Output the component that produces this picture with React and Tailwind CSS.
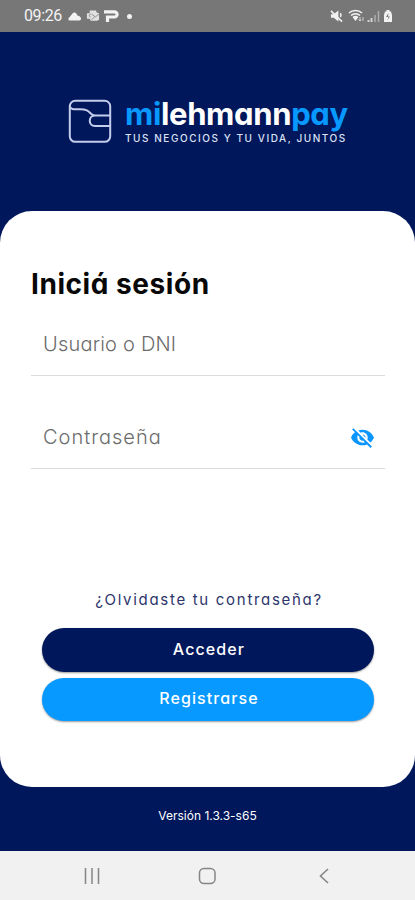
import { MdVisibilityOff } from "react-icons/md";

const StatusBar = () => (
  <div className="h-8 shrink-0 bg-[#777777] flex items-center justify-between pl-6 pr-[22px] text-[#f2f2f2]">
    <div className="flex items-center">
      <span className="font-[Roboto] text-[16px] leading-none tracking-[-0.4px] w-[44px]">
        09:26
      </span>
      <svg className="w-[13px] h-[14px] mr-[5px]" viewBox="0 0 13 14">
        <path d="M2 11.500C0 11.500-.2 9 1.500 8.300L4.500 4.500c1-1.200 2.800-1.200 3.800 0l1.400 2.300c2 .2 3.300 1.500 3.300 3 0 1-.6 1.700-1.500 1.700z" fill="currentColor" />
      </svg>
      <svg className="w-[14px] h-[14px] mr-1" viewBox="0 0 15 14">
        <path d="M4 1h7v2l3 1v7l-2 1H5l-1-2H1V4h3z" fill="currentColor" opacity="0.85" />
        <path d="M6 5l4 3 4-3M6 11l3-3M5 5a1.500 1.500 0 1 0 0 3" fill="none" stroke="#777777" strokeWidth="0.800" />
      </svg>
      <svg className="w-[15px] h-[14px]" viewBox="0 0 15 14">
        <path d="M0 2.800h10.500a2.500 2.500 0 0 1 0 5.200H3.500v5" fill="none" stroke="currentColor" strokeWidth="3.200" />
      </svg>
      <span className="w-[5px] h-[5px] rounded-full bg-[#f2f2f2] ml-[8px]" />
    </div>
    <div className="flex items-center">
      <svg className="w-[13px] h-[14px] mr-[5px]" viewBox="0 0 14 14">
        <path d="M1 5h3l5-4v12L4 9H1z" fill="currentColor" />
        <path d="M1 1.500l12 11.500M11 4c1 1 1 3 0 4" fill="none" stroke="currentColor" strokeWidth="1.700" />
      </svg>
      <svg className="w-[17px] h-[14px] mr-[2px]" viewBox="0 0 17 14">
        <path d="M1 4a9.500 9.500 0 0 1 13 0M3 6.500a6.500 6.500 0 0 1 9 0" fill="none" stroke="currentColor" strokeWidth="1.600" />
        <path d="M4.500 8a4.500 4.500 0 0 1 6 0l-3 4z" fill="currentColor" />
        <path d="M12 12V8m-1.500 2.500L12 12l1-1.500M15 8v4" fill="none" stroke="currentColor" opacity="0.7" />
      </svg>
      <svg className="w-[13px] h-[14px] mr-[3px]" viewBox="0 0 13 14">
        <path d="M1.500 13v-2M4.500 13V9" stroke="currentColor" strokeWidth="2" opacity="0.75" />
        <path d="M8 13V6M11.500 13V2" stroke="currentColor" strokeWidth="1.500" opacity="0.45" />
      </svg>
      <svg className="w-[10px] h-[14px]" viewBox="0 0 10 14">
        <path d="M3.500 1h3v1.500H8L9 6v7H1V6l1-3.500h1.500z" fill="currentColor" />
        <path d="M5.500 4L3 8h2.500L4.500 11 7 7.500H5z" fill="#777777" />
      </svg>
    </div>
  </div>
);

const Logo = () => (
  <div className="h-[179px] shrink-0 flex pl-[68px] pt-[67px] gap-[13px]">
    <svg className="w-11 h-11 shrink-0" viewBox="0 0 44 44" fill="none" stroke="#c5cdec" strokeWidth="2">
      <rect x="1.800" y="1.800" width="40.400" height="41" rx="5.500" />
      <path d="M1.800 7.500c.7 2 2.200 2.700 4.200 2.700h6c7 0 8.500 2 11 4.500 1 1 2 1.500 3.500 1.800" />
      <path d="M42 16.500H27c-7 0-7 10.500 0 10.500h15" />
    </svg>
    <div className="text-white">
      <div className="text-[31px] leading-[38px] h-9 -mt-[4px] mb-px font-bold tracking-[-0.35px] whitespace-nowrap">
        <span className="text-[#0799ff]">mi</span>lehmann
        <span className="text-[#0799ff]">pay</span>
      </div>
      <div className="text-[10px] leading-[12px] font-medium tracking-[1.55px] whitespace-nowrap text-[#dce2f4]">
        TUS NEGOCIOS Y TU VIDA, JUNTOS
      </div>
    </div>
  </div>
);

const Field = ({ label, children }) => (
  <div className="h-[63px] border-b-[1.5px] border-[#dcdcdc] pl-3 pr-[10px] flex items-center justify-between">
    {label}
    {children}
  </div>
);

const NavBar = () => (
  <div className="h-[49px] shrink-0 bg-[#f1f1f1] flex items-center text-[#858585]">
    <svg className="w-4 h-4 ml-[84px]" viewBox="0 0 16 16" stroke="currentColor" strokeWidth="1.500">
      <path d="M1.500 0v16M8 0v16M14.500 0v16" />
    </svg>
    <svg className="w-[18px] h-[18px] ml-[98px]" viewBox="0 0 18 18" fill="none" stroke="currentColor" strokeWidth="1.500">
      <rect x="1.500" y="1.500" width="15.500" height="15" rx="4.500" />
    </svg>
    <svg className="w-[10px] h-4 ml-[103px]" viewBox="0 0 10 16" fill="none" stroke="currentColor" strokeWidth="1.600">
      <path d="M9 1L1.500 8 9 15" />
    </svg>
  </div>
);

export default function App() {
  return (
    <div className="w-[415px] h-[900px] overflow-hidden flex flex-col bg-[#00175c] font-[Inter,sans-serif] [font-feature-settings:'cv11']">
      <StatusBar />
      <Logo />
      <main className="h-[576px] shrink-0 bg-white rounded-[32px] px-[31px] pt-[55px] flex flex-col">
        <h1 className="text-[28px] leading-9 h-[47px] font-bold tracking-[0.55px] text-[#080808]">
          Iniciá sesión
        </h1>
        <div className="flex flex-col gap-[30px] w-[354px] text-[20px] font-light text-[#6c6c6c]">
          <Field label={<span className="tracking-[0.2px]">Usuario o DNI</span>} />
          <Field label={<span className="tracking-[1px]">Contraseña</span>}>
            <MdVisibilityOff className="w-[25px] h-[25px] text-[#0a95ff]" />
          </Field>
        </div>
        <a className="block mt-[119px] pl-[3px] text-center text-[15px] leading-6 tracking-[1.7px] text-[#2c356b]">
          ¿Olvidaste tu contraseña?
        </a>
        <div className="mt-[16px] ml-[11px] w-[332px] flex flex-col gap-[6px] text-white text-[16px] font-medium tracking-[1.1px]">
          <button className="h-11 rounded-full bg-[#00175c] pl-[2px] pb-[2px] shadow-[0_1px_2px_rgba(0,0,0,0.4)]">
            Acceder
          </button>
          <button className="h-[43px] rounded-full bg-[#0799ff] pl-[2px] pb-[4px] shadow-[0_1px_2px_rgba(0,0,0,0.4)]">
            Registrarse
          </button>
        </div>
      </main>
      <footer className="h-16 shrink-0 pt-[20px] text-center text-[12px] leading-[18px] text-white">
        Versión 1.3.3-s65
      </footer>
      <NavBar />
    </div>
  );
}
